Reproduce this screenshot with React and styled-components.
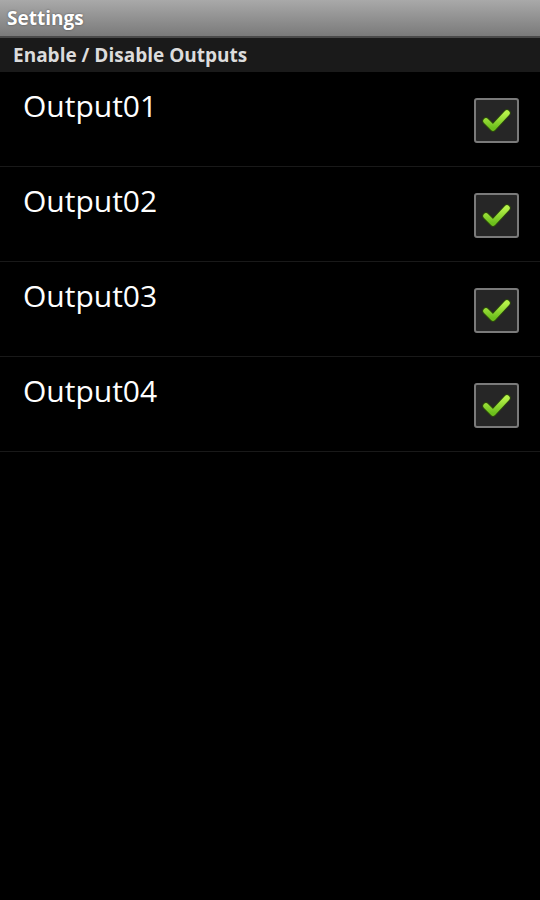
import React from "react";
import styled, { createGlobalStyle } from "styled-components";

const Global = createGlobalStyle`
  html, body { margin: 0; padding: 0; background: #000; }
  body { font-family: "Open Sans", Roboto, "Liberation Sans", sans-serif; }
`;

const Screen = styled.div`
  width: 540px;
  height: 900px;
  background: #000;
  display: flex;
  flex-direction: column;
  overflow: hidden;
`;

const TitleBar = styled.div`
  height: 38px;
  box-sizing: border-box;
  padding: 0 7px 1px;
  display: flex;
  align-items: center;
  background: linear-gradient(#a9a9a9, #7a7a7a);
  border-bottom: 2px solid #4a4a4a;
  color: #fff;
  font-weight: 700;
  font-size: 19px;
  text-shadow: 0 0 2px rgba(0,0,0,0.5);
`;

const SectionHeader = styled.div`
  height: 34px;
  box-sizing: border-box;
  padding: 0 13px;
  display: flex;
  align-items: center;
  background: #1a1a1a;
  color: #dcdcdc;
  font-weight: 700;
  font-size: 19px;
`;

const Row = styled.div`
  height: 95px;
  box-sizing: border-box;
  border-bottom: 1px solid #191919;
  display: flex;
  justify-content: space-between;
  align-items: flex-start;
  padding: 0 21px 0 23px;
`;

const Label = styled.div`
  color: #fff;
  font-size: 30px;
  line-height: 40px;
  margin-top: 14px;
`;

const Box = styled.div`
  width: 45px;
  height: 45px;
  margin-top: 26px;
  box-sizing: border-box;
  border: 2px solid #7a7a7a;
  border-radius: 3px;
  background: #262626;
  display: flex;
  align-items: center;
  justify-content: center;
`;

const Check = () => (
  <svg width="33" height="33" viewBox="0 0 33 33">
    <defs>
      <linearGradient id="g" x1="0" y1="0" x2="0" y2="1">
        <stop offset="0" stopColor="#b6f24a" />
        <stop offset="1" stopColor="#6cbf1c" />
      </linearGradient>
    </defs>
    <path
      d="M6 17 L13 24 L27 9"
      fill="none"
      stroke="#2d4a0c"
      strokeWidth="7.5"
      strokeLinecap="round"
      strokeLinejoin="round"
    />
    <path
      d="M6 17 L13 24 L27 9"
      fill="none"
      stroke="url(#g)"
      strokeWidth="5.5"
      strokeLinecap="round"
      strokeLinejoin="round"
    />
  </svg>
);

const outputs = ["Output01", "Output02", "Output03", "Output04"];

export default function App() {
  return (
    <Screen>
      <Global />
      <TitleBar>Settings</TitleBar>
      <SectionHeader>Enable / Disable Outputs</SectionHeader>
      {outputs.map((o) => (
        <Row key={o}>
          <Label>{o}</Label>
          <Box>
            <Check />
          </Box>
        </Row>
      ))}
    </Screen>
  );
}
